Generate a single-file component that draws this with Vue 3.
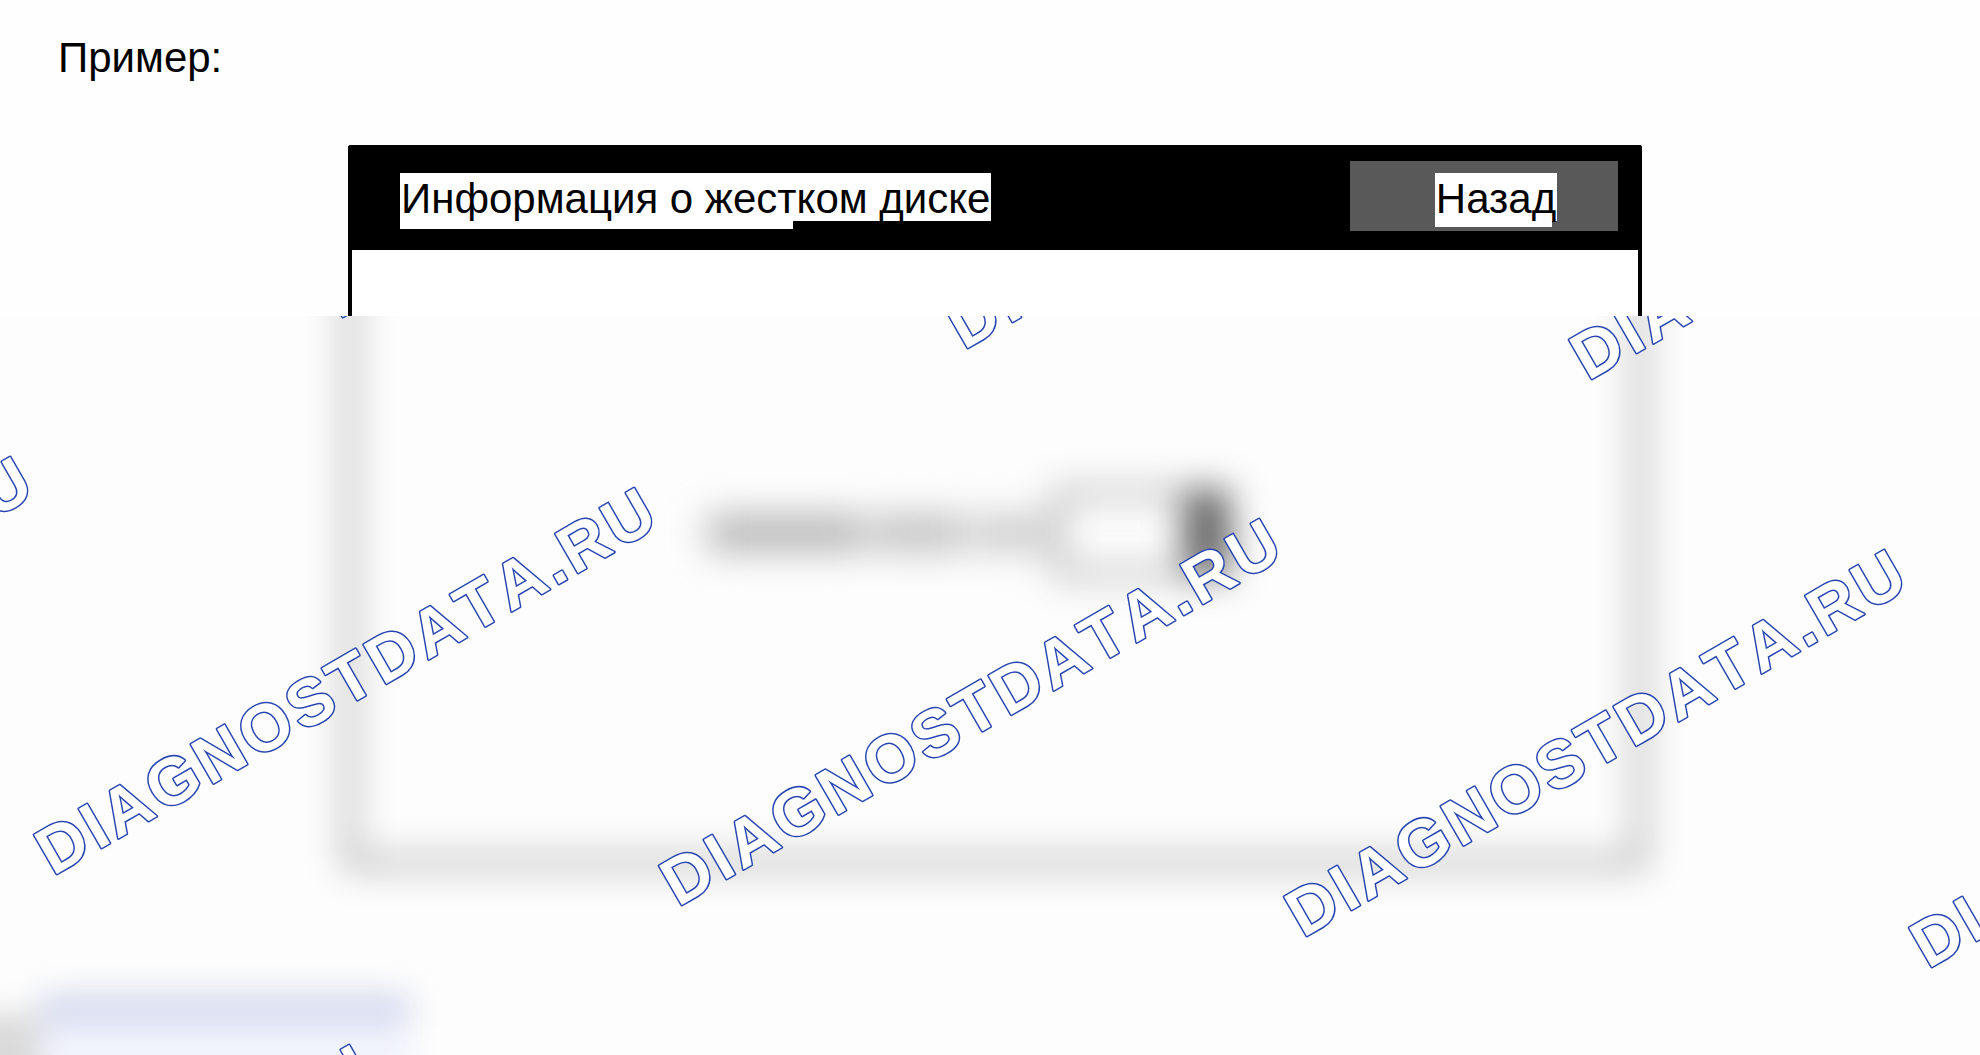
<script setup>
const watermark = 'DIAGNOSTDATA.RU'

const marks = [
  { x: 343, y: 2 },
  { x: 968, y: 33 },
  { x: 1592, y: 64 },
  { x: -567, y: 528 },
  { x: 57, y: 559 },
  { x: 682, y: 590 },
  { x: 1307, y: 621 },
  { x: 1932, y: 652 },
  { x: -228, y: 1116 },
]
</script>

<template>
  <main class="page">
    <p class="caption">Пример:</p>

    <section class="window">
      <header class="titlebar">
        <h1 class="title"><span class="highlight">Информация о жестком диске</span></h1>
        <button class="back" type="button"><span class="highlight">Назад</span></button>
      </header>
    </section>

    <section class="veil">
      <div class="ghost-window" aria-hidden="true">
        <div class="ghost-row">
          <i class="word long"></i>
          <i class="word medium"></i>
          <i class="word short"></i>
          <div class="ghost-field"><i class="ghost-arrow"></i></div>
        </div>
      </div>
      <div class="ghost-footer" aria-hidden="true">
        <i class="ghost-mark"></i>
        <i class="ghost-link"></i>
      </div>
      <svg class="watermarks">
        <text
          v-for="(m, i) in marks"
          :key="i"
          :transform="`translate(${m.x} ${m.y}) rotate(-30)`"
          x="-4"
          y="-1"
        >{{ watermark }}</text>
      </svg>
    </section>
  </main>
</template>

<style>
body {
  margin: 0;
  background: #fefefe;
}
</style>

<style scoped>
.page {
  display: flex;
  flex-direction: column;
  min-height: 100vh;
  color: #000;
  font-family: "Liberation Sans", Arial, sans-serif;
  font-size: 42px;
  line-height: 48px;
}

.caption {
  margin: 0;
  padding: 34px 58px 63px;
}

.window {
  box-sizing: border-box;
  height: 171px;
  margin: 0 338px 0 348px;
  border: 4px solid #000;
  border-bottom: 0;
  border-radius: 3px 3px 0 0;
  background: #fff;
}

.titlebar {
  display: flex;
  justify-content: space-between;
  align-items: flex-start;
  box-sizing: border-box;
  height: 101px;
  padding: 12px 20px 0 48px;
  background: #000;
}

.title {
  margin: 12px 0 0;
  font-size: 42px;
  font-weight: 400;
}

.highlight {
  position: relative;
  display: block;
  box-sizing: border-box;
  height: 48px;
  padding: 2px 1px 0;
  background: #fff;
}

.highlight::after {
  content: "";
  position: absolute;
  top: 100%;
  left: 0;
  z-index: 0;
  height: 8px;
  background: #fff;
}

.title .highlight::after {
  width: 393px;
}

.back {
  display: flex;
  justify-content: center;
  align-items: flex-start;
  width: 268px;
  height: 70px;
  padding: 12px 0 0 24px;
  box-sizing: border-box;
  border: 0;
  background: #595959;
  color: #000;
  font: inherit;
}

.back .highlight::after {
  right: 5px;
  height: 6px;
}

.veil {
  position: relative;
  display: flex;
  flex: 1;
  flex-direction: column;
  justify-content: space-between;
  overflow: hidden;
  background: #fdfdfd;
}

.ghost-window {
  box-sizing: border-box;
  height: 649px;
  margin: -100px 338px 0 348px;
  padding-top: 271px;
  border: 4px solid #000;
  filter: blur(18px);
}

.ghost-row {
  display: flex;
  justify-content: center;
  align-items: center;
  gap: 8px;
  padding-right: 54px;
}

.word {
  height: 36px;
  background: #b4b4b4;
}

.long {
  width: 156px;
}

.medium {
  width: 92px;
  background: #c0c0c0;
}

.short {
  width: 76px;
  background: #ccc;
}

.ghost-field {
  display: flex;
  justify-content: flex-end;
  box-sizing: border-box;
  width: 172px;
  height: 84px;
  border: 4px solid #222;
}

.ghost-arrow {
  width: 40px;
  background: #606060;
}

.ghost-footer {
  display: flex;
  align-items: flex-start;
  height: 62px;
  filter: blur(15px);
}

.ghost-mark {
  width: 70px;
  height: 120px;
  margin: 20px 0 0 -30px;
  background: #dadada;
}

.ghost-link {
  width: 370px;
  height: 32px;
  border-bottom: 60px solid #f2f4fd;
  background: #d5daee;
}

.watermarks {
  position: absolute;
  inset: 0;
  width: 100%;
  height: 100%;
  fill: #fff;
  stroke: #2846b0;
  stroke-width: 3px;
  stroke-linejoin: round;
  paint-order: stroke;
  font-size: 66px;
  font-weight: 700;
  font-kerning: none;
  letter-spacing: 4px;
}
</style>
